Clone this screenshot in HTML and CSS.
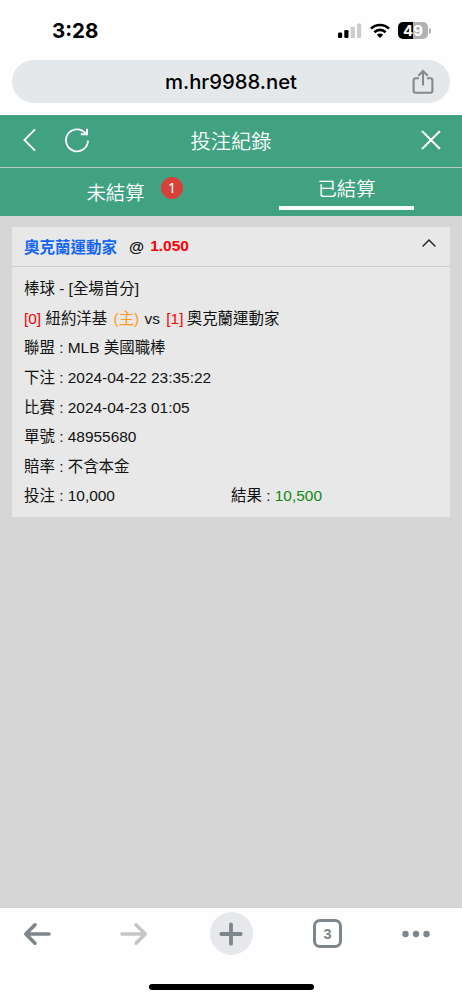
FILE: index.html
```html
<!DOCTYPE html>
<html lang="zh-Hant">
	<head>
		<meta charset="utf-8" />
		<meta name="viewport" content="width=device-width, initial-scale=1" />
		<title>投注紀錄</title>
		<link rel="stylesheet" href="styles.css">
	</head>
	<body>
		<div class="status-bar">
			<div class="time">3:28</div>
			<div class="status-icons">
				<svg class="signal" width="24" height="16" viewBox="0 0 24 16">
					<rect x="0" y="9.5" width="4.2" height="5.5" rx="1.3" />
					<rect x="6.3" y="7" width="4.2" height="8" rx="1.3" />
					<rect x="12.7" y="3.7" width="4.2" height="11.3" rx="1.3" fill="#cbcbcb" />
					<rect x="19" y="0.5" width="4.2" height="14.5" rx="1.3" fill="#cbcbcb" />
				</svg>
				<svg class="wifi" width="20" height="16" viewBox="0 0 20 16">
					<g fill="none" stroke="#000" stroke-width="2.6">
						<path d="M1 5.7a12.8 12.8 0 0 1 18 0" />
						<path d="M4.4 9.2a8 8 0 0 1 11.2 0" />
					</g>
					<path d="M10 15l-3.2-3.2a4.6 4.6 0 0 1 6.4 0z" />
				</svg>
				<div class="battery">49</div>
				<div class="battery-tip"></div>
			</div>
		</div>
		<div class="address-bar">
			<span class="address">m.hr9988.net</span>
			<svg class="share" width="22" height="26" viewBox="0 0 22 26" fill="none" stroke="#84898e" stroke-width="2.1">
				<path d="M7 9.2H3.6a2 2 0 0 0-2 2v10.5a2 2 0 0 0 2 2h14.8a2 2 0 0 0 2-2V11.2a2 2 0 0 0-2-2H15" />
				<path d="M11 16.5V2.5M6.3 6.7L11 2l4.7 4.7" />
			</svg>
		</div>

		<div class="header">
			<div class="header-left">
				<svg width="14" height="24" viewBox="0 0 14 24" fill="none" stroke="#fff" stroke-width="1.8">
					<path d="M13 1.3L2.4 12 13 22.7" />
				</svg>
				<svg width="26" height="26" viewBox="0 0 26 26" fill="none" stroke="#fff" stroke-width="1.8">
					<path d="M24 13.5A11 11 0 1 1 21.5 6.3" />
					<path d="M23 1.8v5.4h-6.2" stroke-width="2" />
				</svg>
			</div>
			<div class="title">投注紀錄</div>
			<svg class="close" width="20" height="20" viewBox="0 0 20 20" fill="none" stroke="#fff" stroke-width="1.9">
				<path d="M1 1l18 18M19 1L1 19" />
			</svg>
		</div>
		<div class="tabs">
			<div class="tab">
				<span class="tab-label">未結算</span>
				<span class="badge">1</span>
			</div>
			<div class="tab active">
				<span class="tab-label">已結算</span>
			</div>
		</div>

		<div class="content">
			<div class="card">
				<div class="card-header">
					<span class="team">奧克蘭運動家</span>
					<span class="at">@</span>
					<span class="odds">1.050</span>
					<svg class="arrow" width="14" height="8" viewBox="0 0 14 8" fill="none" stroke="#222" stroke-width="1.4">
						<path d="M.6 7.4L7 1l6.4 6.4" />
					</svg>
				</div>
				<div class="card-body">
					<div class="row">棒球 - [全場首分]</div>
					<div class="row"><span class="red">[0]</span> 紐約洋基 <span class="home">(主)</span> vs <span class="red away">[1]</span> 奧克蘭運動家</div>
					<div class="row">聯盟 : MLB 美國職棒</div>
					<div class="row">下注 : 2024-04-22 23:35:22</div>
					<div class="row">比賽 : 2024-04-23 01:05</div>
					<div class="row">單號 : 48955680</div>
					<div class="row">賠率 : 不含本金</div>
					<div class="row half">
						<span>投注 : 10,000</span>
						<span>結果 : <span class="green">10,500</span></span>
					</div>
				</div>
			</div>
		</div>

		<div class="toolbar">
			<div class="tool">
				<svg width="28" height="24" viewBox="0 0 28 24" fill="none" stroke="#7d868b" stroke-width="3.6" stroke-linecap="round" stroke-linejoin="round">
					<path d="M26 12H3M12 2.8L2.8 12l9.2 9.2" />
				</svg>
			</div>
			<div class="tool">
				<svg width="28" height="24" viewBox="0 0 28 24" fill="none" stroke="#c6c6c6" stroke-width="3.6" stroke-linecap="round" stroke-linejoin="round">
					<path d="M2 12h23M16 2.8l9.2 9.2-9.2 9.2" />
				</svg>
			</div>
			<div class="tool">
				<div class="plus">
					<svg width="24" height="24" viewBox="0 0 24 24" stroke="#7d868b" stroke-width="3.8" stroke-linecap="round">
						<path d="M2.3 12h19.4M12 2.3v19.4" />
					</svg>
				</div>
			</div>
			<div class="tool">
				<div class="tab-count">3</div>
			</div>
			<div class="tool">
				<svg width="28" height="8" viewBox="0 0 28 8" fill="#7d868b">
					<circle cx="3.5" cy="4" r="3.2" />
					<circle cx="14" cy="4" r="3.2" />
					<circle cx="24.5" cy="4" r="3.2" />
				</svg>
			</div>
		</div>
		<div class="home-line"></div>
	</body>
</html>
```

FILE: styles.css
```css
* {
	box-sizing: border-box;
}

body {
	margin: 0;
	height: 1000px;
	display: flex;
	flex-direction: column;
	overflow: hidden;
	background-color: #fefefe;
	font-family: 'Liberation Sans', 'Noto Sans CJK TC', sans-serif;
	color: #111;
}

svg {
	display: block;
	flex-shrink: 0;
}

.status-bar {
	height: 60px;
	padding: 0 31px 0 52px;
	display: flex;
	align-items: center;
	justify-content: space-between;
}

.time {
	font-family: Inter, sans-serif;
	font-size: 20.5px;
	font-weight: 700;
	line-height: 24px;
	padding-top: 2px;
	color: #000;
}

.status-icons {
	display: flex;
	align-items: center;
	padding-top: 1px;
}

.wifi {
	margin: 0 8px;
}

.battery {
	width: 30px;
	height: 17px;
	border-radius: 5px;
	background: linear-gradient(to right, #000 50%, #b2b2b2 50%);
	color: #fff;
	font-family: Inter, sans-serif;
	font-size: 15px;
	font-weight: 700;
	line-height: 17px;
	text-align: center;
}

.battery-tip {
	width: 2px;
	height: 6px;
	margin-left: 1px;
	border-radius: 0 2px 2px 0;
	background-color: #b2b2b2;
}

.address-bar {
	height: 43px;
	margin: 0 12px 12px;
	padding: 0 16px 0 38px;
	border-radius: 22px;
	background-color: #e5e8eb;
	display: flex;
	align-items: center;
}

.address {
	flex: 1;
	text-align: center;
	font-family: Inter, sans-serif;
	font-size: 20.3px;
	font-weight: 500;
	line-height: 24px;
	color: #000;
}

.header {
	height: 53px;
	padding: 0 21px 2px 22px;
	display: grid;
	grid-template-columns: 1fr auto 1fr;
	align-items: center;
	background-color: #40a281;
	border-bottom: 1px solid #b5c9c1;
}

.header-left {
	display: flex;
	align-items: center;
	gap: 28px;
}

.title {
	font-size: 20.3px;
	font-weight: 350;
	line-height: 28px;
	padding-top: 4px;
	margin-left: -1px;
	color: #fff;
}

.close {
	justify-self: end;
}

.tabs {
	height: 48px;
	display: grid;
	grid-template-columns: 1fr 1fr;
	background-color: #40a281;
	color: #fff;
}

.tab {
	position: relative;
	display: flex;
	justify-content: center;
}

.tab-label {
	padding-top: 11px;
	font-size: 19.4px;
	font-weight: 350;
	line-height: 28px;
}

.badge {
	position: absolute;
	left: 161px;
	top: 9px;
	width: 22px;
	height: 22px;
	border-radius: 50%;
	background-color: #d8413b;
	font-family: 'Noto Sans', sans-serif;
	font-size: 14px;
	line-height: 21px;
	text-align: center;
}

.tab.active {
	flex-direction: column;
	align-items: center;
	justify-content: flex-start;
}

.active .tab-label {
	padding-top: 7px;
}

.tab.active::after {
	content: '';
	width: 135px;
	height: 4px;
	margin-top: 3px;
	background-color: #fff;
}

.content {
	flex: 1;
	padding: 11px 12px 0;
	background-color: #d6d6d6;
}

.card {
	height: 290px;
	background-color: #e8e8e8;
}

.card-header {
	height: 40px;
	padding: 0 14px 2px 12px;
	display: flex;
	align-items: center;
	border-bottom: 1px solid #cdcdcd;
	font-size: 15.5px;
	font-weight: bold;
}

.team {
	color: #1565f5;
}

.at {
	margin: 0 6px 0 12px;
	padding-top: 2px;
}

.odds {
	color: #fb0007;
	padding-top: 1px;
}

.arrow {
	margin: -6px 0 0 auto;
}

.card-body {
	padding: 7px 12px;
	font-size: 15.45px;
}

.row {
	height: 29.65px;
	line-height: 29.65px;
	white-space: nowrap;
}

.half {
	display: grid;
	grid-template-columns: 1fr 1fr;
}

.red {
	color: #fb0007;
}

.home {
	margin: 0 1px 0 2px;
	color: #ff9a1f;
}

.away {
	margin: 0 -1px 0 2px;
}

.green {
	color: #108a10;
}

.toolbar {
	height: 51px;
	display: grid;
	grid-template-columns: 74px 120px 74px 119px 57px;
	align-items: center;
	justify-items: center;
}

.plus {
	width: 43px;
	height: 43px;
	border-radius: 50%;
	background-color: #e6e8ec;
	display: flex;
	align-items: center;
	justify-content: center;
}

.tab-count {
	width: 29px;
	height: 29px;
	border: 3px solid #7d868b;
	border-radius: 7px;
	color: #7d868b;
	font-size: 14.5px;
	font-weight: bold;
	line-height: 24px;
	text-align: center;
}

.home-line {
	width: 165px;
	height: 6px;
	margin: 25px auto 10px;
	border-radius: 3px;
	background-color: #000;
}
```
